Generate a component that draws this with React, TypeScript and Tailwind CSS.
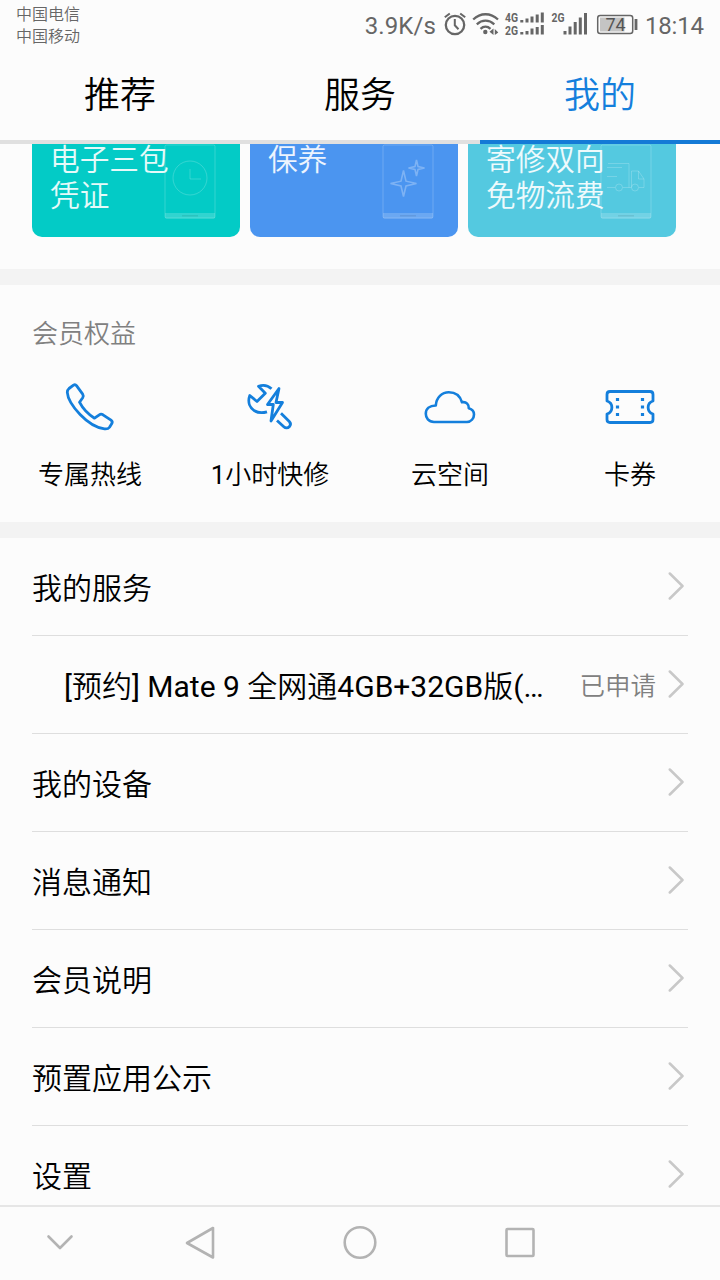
import type { ReactNode } from 'react';

const TABS = ['推荐', '服务', '我的'];

const CARDS = [
  { lines: ['电子三包', '凭证'], bg: 'bg-[#03cbc6]', art: <ClockArt /> },
  { lines: ['保养'], bg: 'bg-[#4b95f0]', art: <SparkleArt /> },
  { lines: ['寄修双向', '免物流费'], bg: 'bg-[#54c9e0]', art: <TruckArt /> },
];

const BENEFITS = [
  { label: '专属热线', icon: <PhoneIcon /> },
  { label: '1小时快修', icon: <RepairIcon /> },
  { label: '云空间', icon: <CloudIcon /> },
  { label: '卡券', icon: <TicketIcon /> },
];

const ROWS = [
  { label: '我的服务' },
  { label: '[预约] Mate 9 全网通4GB+32GB版(…', status: '已申请', sub: true },
  { label: '我的设备' },
  { label: '消息通知' },
  { label: '会员说明' },
  { label: '预置应用公示' },
  { label: '设置' },
];

// Latin runs are set in regular weight, Chinese runs keep the lighter one
function MixedText({ text }: { text: string }) {
  return text.split(/([\u4e00-\u9fff]+)/).map((part, i) =>
    i % 2 ? part : <span key={i} className="font-normal">{part}</span>
  );
}

function PhoneFrame({ children }: { children: ReactNode }) {
  return (
    <svg className="absolute right-[24px] bottom-[18px]" width="52" height="76" viewBox="0 0 52 76" fill="none" stroke="white" strokeOpacity="0.2">
      <rect x="1" y="2" width="50" height="73" rx="1.5" />
      <path d="M1 70h50v4a1.5 1.5 0 0 1-1.5 1.5h-47A1.5 1.5 0 0 1 1 74z" fill="white" fillOpacity="0.18" stroke="none" />
      <path d="M18 72.800h16" stroke="black" strokeOpacity="0.1" strokeWidth="1.2" />
      {children}
    </svg>
  );
}

function ClockArt() {
  return (
    <PhoneFrame>
      <circle cx="26" cy="35" r="17" />
      <path d="M26 26v10h11" />
    </PhoneFrame>
  );
}

function SparkleArt() {
  return (
    <PhoneFrame>
      <g strokeWidth="1.6" strokeOpacity="0.28">
        <path d="M21.500 27.500L24 38.200L34.500 40.500L24 43L21.500 53.500L19 43L8.500 40.500L19 38.200z" />
        <path d="M34.500 17L36 23.500L42.500 25L36 26.500L34.500 33L33 26.500L26.500 25L33 23.500z" />
      </g>
    </PhoneFrame>
  );
}

function TruckArt() {
  return (
    <PhoneFrame>
      <path d="M8 20.500H29V44.500H23M7 44.500H15M31.500 44.500V28H38.500L44 36V44.500H39M29 44.500H31M38.500 28V36H44M7 24.500H22M7 33.500H17" />
      <circle cx="19" cy="44.500" r="3.500" />
      <circle cx="35" cy="44.500" r="3.500" />
    </PhoneFrame>
  );
}

function PhoneIcon() {
  return (
    <svg width="54" height="54" viewBox="0 0 54 54" fill="none" stroke="#147fdc" strokeWidth="2.8" strokeLinejoin="round">
      <path d="M6 8.500L10.500 5.200Q12.200 4 13.500 5.700L19.700 14.200Q20.900 16 19.700 17.800L16.500 22.200C20 29 25.500 34.500 31.500 38.200L36.300 34.800Q38 33.600 40 34.800L48 40.200Q50 41.700 48.700 43.700L46.500 47.200Q45 49.300 41.500 48.900C33 47.800 23.500 41.200 17.100 34.500C10 27 4.700 18.300 4.300 12.500Q4.200 10 6 8.500z" />
    </svg>
  );
}

function RepairIcon() {
  return (
    <svg width="54" height="54" viewBox="0 0 54 54" fill="none" stroke="#147fdc" strokeWidth="2.8" strokeLinejoin="round">
      <path d="M28.500 8.800C24.500 5 19.500 4.800 15.500 6.300L22.300 13.300L14 21.500L6.800 15.500C4.200 22.500 7.200 28 11.500 30.800C15.500 33.200 20 33 24 31.800" />
      <path d="M36 8.500L24.500 24.500H30.300L28 41L39.500 22.500H33z" />
      <path d="M34 40.500L40.800 46.800C42.500 48.400 44.800 48.300 46.300 46.700C47.900 45 47.900 43.200 46.300 41.500L38 33.300" />
    </svg>
  );
}

function CloudIcon() {
  return (
    <svg width="54" height="54" viewBox="0 0 54 54" fill="none" stroke="#147fdc" strokeWidth="2.6" strokeLinejoin="round">
      <path d="M11 42C5.500 42 2.800 38 2.800 33.800C2.800 29 6.500 25.500 12.800 25.500C13.300 17.500 19 12.200 25.800 12.200C32.200 12.200 37.200 16 39 22.300C43.500 21.500 46 24.500 45.800 28.300C49.300 29.300 51 31.800 51 34.500C51 38.500 48 42 44 42z" />
    </svg>
  );
}

function TicketIcon() {
  return (
    <svg width="54" height="54" viewBox="0 0 54 54" fill="none" stroke="#147fdc" strokeWidth="2.8" strokeLinejoin="round">
      <path d="M7 11.500H47Q50 11.500 50 14.500V21C43.500 23 43.500 32 50 34V39.500Q50 42.500 47 42.500H7Q4 42.500 4 39.500V34C10.500 32 10.500 23 4 21V14.500Q4 11.500 7 11.500z" />
      <path d="M14.500 18v3M14.500 25.500v3M14.500 33v3M39.500 18v3M39.500 25.500v3M39.500 33v3" strokeWidth="3.2" />
    </svg>
  );
}

function StatusIcons() {
  return (
    <svg width="198" height="48" viewBox="442 0 198 48" fill="none" stroke="#666" strokeWidth="2">
      {/* alarm */}
      <circle cx="455" cy="25" r="9.2" strokeWidth="2.3" />
      <path d="M454.800 19v6.300l3.700 3.900" />
      <path d="M444.800 17.300l5-3.800M465.200 17.300l-5-3.800" />
      {/* wifi */}
      <path d="M473.200 19.500C480.500 12.500 490.500 12.500 498 19.500M476.800 24.300C482 19.500 489 19.500 494.300 24.300M480.500 28.800C483.500 26 487.500 26 490.500 28.800" strokeWidth="2.3" />
      <circle cx="485.300" cy="32" r="2.2" fill="#666" stroke="none" />
      <path d="M493.500 28.500v6.500l-4-3.200zM494.800 29v6l3.500-2.500z" fill="#666" stroke="none" />
      {/* sim 1 */}
      <g fill="#666" stroke="none" fontFamily="Roboto, 'Liberation Sans', sans-serif" fontWeight="700" fontSize="12.500">
        <text x="505" y="22.300" textLength="13" lengthAdjust="spacingAndGlyphs">4G</text>
        <text x="505" y="34.600" textLength="13" lengthAdjust="spacingAndGlyphs">2G</text>
        <text x="551.500" y="22.300" textLength="13" lengthAdjust="spacingAndGlyphs">2G</text>
      </g>
      <path d="M521.800 20v2.500M527 18.500v4M532 16.500v6M537.200 14.500v8M542.300 12.500v10" strokeWidth="3" />
      <path d="M521.800 32v2.500M527 31v3.500M532 28.500v6M537.200 27v7.500M542.300 25v9.500" strokeWidth="3" />
      {/* sim 2 */}
      <path d="M565 31v3.500M570 26.500v8M575.200 22v12.500M580.300 17.500v17M585.500 13v21.500" strokeWidth="3" />
      {/* battery */}
      <rect x="597.700" y="15.500" width="35" height="18" rx="2.500" strokeWidth="1.500" />
      <rect x="600" y="17.500" width="24.500" height="14" fill="#c4c4c4" stroke="none" />
      <path d="M636 19v11" strokeWidth="2.800" />
      <text x="615.500" y="31" textAnchor="middle" fill="#555" stroke="none" fontFamily="Roboto, 'Liberation Sans', sans-serif" fontSize="18" fontWeight="400">74</text>
    </svg>
  );
}

function Chevron() {
  return (
    <svg className="shrink-0" width="16" height="30" viewBox="0 0 16 30" fill="none" stroke="#c8c8c8" strokeWidth="2.5" strokeLinecap="round" strokeLinejoin="round">
      <path d="M1.800 1.500L14.500 14L1.800 26.500" />
    </svg>
  );
}

export default function App() {
  return (
    <div className="flex h-[1280px] w-[720px] flex-col overflow-hidden bg-[#fcfcfc] font-[Roboto,'Noto_Sans_CJK_SC',sans-serif] text-black">
      {/* status bar */}
      <header className="flex h-12 shrink-0 justify-between pl-4 pr-[15px] text-[#666]">
        <div className="pt-1 text-base font-[350] leading-[22px]">
          <p>中国电信</p>
          <p>中国移动</p>
        </div>
        <div className="flex items-center">
          <span className="mr-[6px] pt-[3px] text-2xl tracking-[0.1px]">3.9K/s</span>
          <StatusIcons />
          <span className="ml-[5px] w-[60px] pt-[3px] text-2xl tracking-[-0.2px]">18:14</span>
        </div>
      </header>

      {/* tabs */}
      <nav className="flex h-24 shrink-0">
        {TABS.map((tab, i) => (
          <div
            key={tab}
            className={`flex flex-1 items-center justify-center border-b-4 pt-[3px] text-[36px] font-[350] ${i === 2 ? 'border-[#147ad6] text-[#147fdc]' : 'border-[#e0e0e0]'}`}
          >
            {tab}
          </div>
        ))}
      </nav>

      {/* service cards, scrolled partly under the tabs */}
      <section className="h-[125px] shrink-0 overflow-hidden px-8">
        <div className="-mt-[11px] flex gap-2.5">
          {CARDS.map((card) => (
            <div key={card.lines[0]} className={`relative h-[104px] w-52 rounded-[10px] pl-[18px] pt-[9px] text-[29.7px] font-[350] leading-9 text-white/90 ${card.bg}`}>
              {card.art}
              {card.lines.map((line) => (
                <p key={line}>{line}</p>
              ))}
            </div>
          ))}
        </div>
      </section>

      <div className="h-4 shrink-0 bg-[#f3f3f3]" />

      {/* member benefits */}
      <section className="h-[237px] shrink-0 pt-[31px]">
        <h2 className="pl-8 text-[26px] font-[350] leading-9 text-[#808080]">会员权益</h2>
        <div className="mt-7 flex">
          {BENEFITS.map((b) => (
            <div key={b.label} className="flex flex-1 flex-col items-center">
              {b.icon}
              <span className="mt-[23px] text-[26px] font-[350] leading-9"><MixedText text={b.label} /></span>
            </div>
          ))}
        </div>
      </section>

      <div className="h-4 shrink-0 bg-[#f3f3f3]" />

      <main className="min-h-0 flex-1 overflow-hidden px-8">
        {ROWS.map((row) => (
          <div key={row.label} className="flex h-[98px] items-center border-b border-[#dedede] pr-1">
            <span className={`flex-1 whitespace-nowrap pt-1 text-[30px] font-[350] ${row.sub ? 'pl-8' : ''}`}><MixedText text={row.label} /></span>
            {row.status && <span className="mr-3 pt-1 text-[25.5px] font-[350] text-[#808080]">{row.status}</span>}
            <Chevron />
          </div>
        ))}
      </main>

      {/* system navigation */}
      <footer className="h-[75px] shrink-0 border-t-2 border-[#e6e6e6]">
        <svg width="720" height="73" viewBox="0 1207 720 73" fill="none" stroke="#b3b3b3" strokeWidth="2.6" strokeLinecap="round" strokeLinejoin="round">
          <path d="M48.500 1236.500L60 1248L71.500 1236.500" />
          <path d="M213 1228V1257.500L187 1243z" />
          <circle cx="360" cy="1242.500" r="15.300" />
          <rect x="506.500" y="1229" width="27" height="27" rx="1" />
        </svg>
      </footer>
    </div>
  );
}
